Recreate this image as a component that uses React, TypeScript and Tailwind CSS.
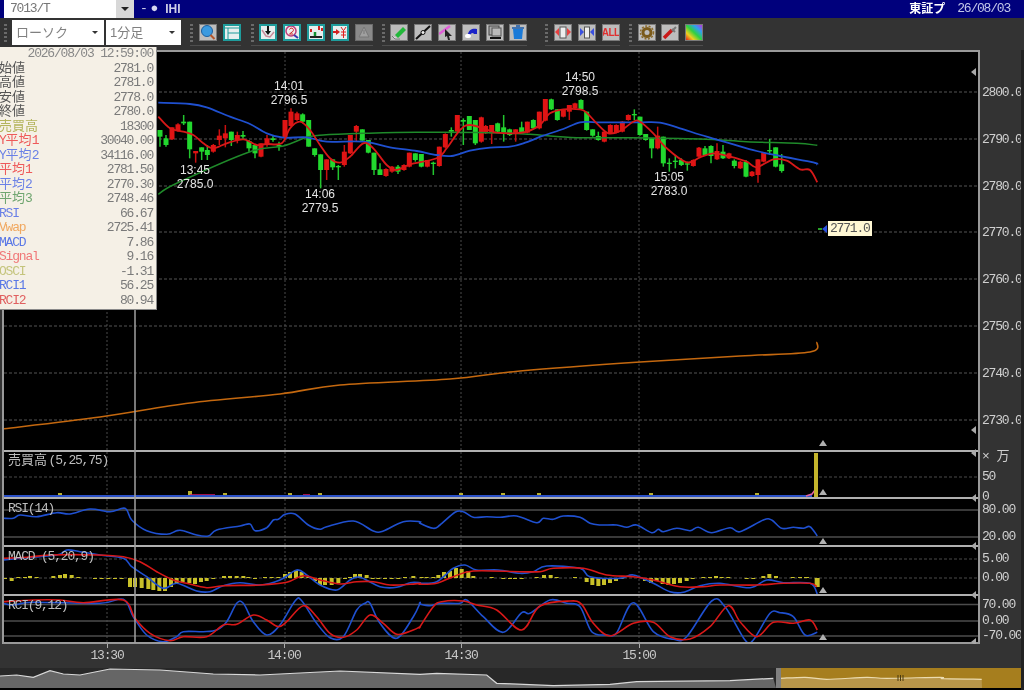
import type { ReactNode } from 'react';

type Pt = number[];

// chart data is kept in page coordinates, read off the screen in 3x crops
const conv = (ox: number, oy: number) => (a: Pt[]) => a.map(([x, y]) => [ox + x / 3, oy + y / 3]);
const a5 = conv(150, 70);
const a6 = conv(480, 70);
const a7 = conv(0, 440);
const a8 = conv(420, 440);
const pts = (a: Pt[]) => a.map((p) => `${p[0].toFixed(1)},${p[1].toFixed(1)}`).join(' ');

// catmull-rom through the read points so the averages don't look faceted
const smooth = (p: Pt[]) => {
  let d = `M${p[0][0].toFixed(1)} ${p[0][1].toFixed(1)}`;
  for (let i = 0; i < p.length - 1; i++) {
    const p0 = p[i - 1] || p[i];
    const p1 = p[i];
    const p2 = p[i + 1];
    const p3 = p[i + 2] || p2;
    const c1x = p1[0] + (p2[0] - p0[0]) / 6;
    const c1y = p1[1] + (p2[1] - p0[1]) / 6;
    const c2x = p2[0] - (p3[0] - p1[0]) / 6;
    const c2y = p2[1] - (p3[1] - p1[1]) / 6;
    d += `C${c1x.toFixed(1)} ${c1y.toFixed(1)} ${c2x.toFixed(1)} ${c2y.toFixed(1)} ${p2[0].toFixed(1)} ${p2[1].toFixed(1)}`;
  }
  return d;
};

const GREEN5: Pt[] = [
  [30, 180, 200, 180, 230], [48, 205, 225, 195, 230], [101, 155, 160, 135, 165], [119, 155, 238, 155, 265],
  [155, 232, 245, 232, 270], [172, 240, 255, 225, 270], [244, 185, 210, 185, 228], [279, 195, 200, 183, 210],
  [297, 213, 235, 210, 245], [315, 225, 250, 225, 265], [369, 205, 210, 195, 215], [387, 225, 230, 215, 242],
  [458, 133, 155, 130, 160], [476, 150, 230, 150, 230], [494, 235, 255, 235, 260], [512, 253, 300, 253, 355],
  [548, 268, 292, 268, 300], [565, 288, 292, 285, 330], [637, 178, 212, 178, 215], [655, 210, 248, 210, 250],
  [672, 248, 300, 248, 315], [690, 298, 315, 280, 315], [744, 290, 305, 285, 312], [796, 250, 270, 250, 275],
  [814, 252, 290, 252, 292], [850, 278, 282, 275, 315], [904, 180, 185, 172, 200], [940, 150, 155, 145, 225],
  [958, 138, 180, 138, 180], [976, 150, 220, 150, 225],
];
const RED5: Pt[] = [
  [66, 172, 208, 172, 210], [84, 163, 183, 160, 185], [137, 243, 250, 243, 278], [190, 225, 245, 222, 248],
  [208, 197, 210, 178, 225], [226, 190, 205, 165, 232], [262, 195, 210, 185, 220], [333, 220, 260, 220, 262],
  [351, 205, 222, 195, 230], [405, 150, 205, 150, 210], [423, 125, 168, 115, 170], [441, 130, 150, 125, 152],
  [530, 268, 300, 268, 330], [583, 245, 285, 225, 290], [601, 195, 250, 195, 252], [619, 168, 185, 165, 215],
  [708, 297, 318, 295, 320], [726, 290, 305, 288, 308], [762, 285, 300, 283, 302], [778, 248, 290, 248, 292],
  [832, 270, 290, 270, 292], [868, 230, 288, 230, 290], [886, 192, 232, 190, 235], [922, 135, 185, 135, 187],
  [994, 142, 215, 140, 218],
];
const GREEN6: Pt[] = [
  [53, 160, 185, 158, 188], [71, 172, 188, 135, 215], [89, 178, 195, 176, 198], [125, 172, 188, 155, 190],
  [160, 150, 175, 148, 178], [214, 88, 118, 86, 120], [232, 118, 150, 118, 152], [303, 90, 118, 88, 120],
  [320, 125, 180, 125, 182], [338, 178, 197, 178, 200], [355, 198, 210, 185, 212], [463, 132, 136, 118, 150],
  [480, 140, 195, 140, 197], [497, 192, 210, 192, 212], [515, 205, 235, 205, 265], [550, 200, 280, 200, 290],
  [568, 278, 282, 265, 305], [586, 272, 276, 255, 295], [604, 270, 285, 265, 288], [622, 280, 284, 275, 302],
  [675, 235, 255, 228, 258], [693, 228, 258, 226, 280], [729, 245, 265, 225, 267], [763, 272, 288, 268, 295],
  [798, 275, 320, 270, 322], [869, 240, 244, 207, 255], [887, 232, 290, 232, 292], [905, 283, 303, 252, 308],
];
const RED6: Pt[] = [
  [17, 168, 190, 165, 192], [35, 165, 190, 165, 222], [107, 178, 190, 178, 215], [142, 155, 188, 155, 190],
  [178, 125, 175, 125, 178], [196, 87, 152, 87, 154], [250, 120, 140, 118, 142], [268, 105, 125, 105, 150],
  [285, 100, 115, 98, 118], [373, 185, 215, 183, 217], [391, 165, 190, 163, 192], [409, 165, 188, 163, 190],
  [427, 155, 185, 153, 187], [445, 135, 150, 133, 152], [533, 197, 235, 170, 238], [640, 270, 288, 268, 290],
  [657, 233, 260, 231, 262], [711, 243, 268, 220, 270], [747, 250, 265, 248, 267], [781, 275, 295, 273, 297],
  [816, 305, 318, 303, 320], [834, 268, 315, 268, 338], [851, 248, 275, 246, 277],
];

const scaleCandle = (ox: number, oy: number) => (a: Pt[]) =>
  a.map(([x, t, b, wt, wb]) => [ox + x / 3, oy + t / 3, oy + b / 3, oy + wt / 3, oy + wb / 3]);
const GREENS = [...scaleCandle(150, 70)(GREEN5), ...scaleCandle(480, 70)(GREEN6)];
const REDS = [...scaleCandle(150, 70)(RED5), ...scaleCandle(480, 70)(RED6)];

const MA_BLUE = [
  ...a5([[25, 98], [120, 102], [170, 112], [240, 140], [300, 162], [350, 190], [400, 203], [470, 202], [530, 215], [640, 215], [720, 232], [800, 243], [860, 255], [905, 258], [960, 242], [1020, 233]]),
  ...a6([[90, 230], [130, 220], [190, 197], [250, 177], [300, 157], [350, 157], [480, 157], [540, 158], [600, 175], [680, 200], [750, 220], [830, 243], [900, 258], [1000, 277], [1012, 284]]),
];
const MA_RED = [
  ...a5([[25, 140], [60, 175], [100, 185], [130, 195], [160, 220], [190, 235], [230, 220], [280, 208], [320, 225], [350, 222], [395, 220], [420, 175], [450, 155], [480, 180], [510, 225], [540, 265], [570, 278], [600, 260], [640, 220], [670, 235], [710, 285], [740, 300], [780, 283], [860, 265], [890, 235], [930, 180], [960, 165], [1020, 182]]),
  ...a6([[50, 188], [100, 190], [140, 185], [180, 165], [210, 130], [250, 118], [300, 118], [320, 128], [350, 160], [385, 190], [420, 183], [460, 155], [480, 155], [520, 190], [560, 235], [620, 277], [660, 262], [700, 250], [750, 260], [800, 275], [830, 292], [880, 268], [920, 272], [960, 298], [990, 300], [1012, 337]]),
];
const MA_GREEN = [
  ...a5([[25, 373], [80, 340], [300, 245], [400, 228], [470, 202], [520, 195], [640, 190], [800, 187], [1020, 188]]),
  ...a6([[150, 193], [290, 203], [450, 203], [660, 207], [800, 215], [950, 220], [1012, 226]]),
];
const VWAP: Pt[] = [[2, 429], [100, 417], [190, 403], [280, 394], [340, 385], [450, 379], [520, 371], [640, 362], [740, 356], [810, 352], [817, 342]];

const RSI_LINE = [
  ...a7([[10, 235], [40, 235], [60, 225], [110, 230], [170, 218], [210, 222], [270, 207], [330, 215], [375, 205], [395, 240], [440, 272], [500, 283], [530, 272], [550, 272], [590, 285], [625, 288], [650, 270], [720, 258], [750, 252], [765, 272], [800, 263], [820, 240], [835, 238], [855, 223], [885, 222], [925, 255], [960, 268], [980, 260], [1060, 243], [1120, 273], [1150, 273], [1210, 245], [1260, 245]]),
  ...a8([[0, 250], [40, 265], [60, 255], [105, 217], [130, 215], [160, 232], [200, 230], [240, 232], [290, 228], [350, 248], [370, 235], [400, 238], [430, 228], [480, 232], [510, 250], [540, 255], [590, 255], [620, 262], [650, 255], [695, 278], [715, 268], [730, 275], [770, 265], [810, 272], [835, 262], [875, 278], [930, 263], [960, 275], [1030, 240], [1055, 240], [1085, 265], [1120, 262], [1150, 265], [1170, 260], [1192, 288]]),
];

const MACD_BLUE = [
  ...a7([[10, 360], [60, 355], [170, 345], [200, 330], [240, 335], [300, 345], [370, 355], [395, 380], [440, 410], [490, 445], [530, 430], [590, 453], [630, 455], [670, 437], [720, 428], [780, 435], [840, 420], [890, 390], [920, 405], [960, 435], [1010, 450], [1050, 420], [1080, 412], [1140, 440], [1190, 442], [1230, 428], [1260, 428]]),
  ...a8([[0, 430], [50, 425], [100, 385], [135, 375], [170, 390], [235, 390], [300, 400], [340, 395], [380, 378], [480, 385], [510, 410], [600, 415], [640, 405], [700, 430], [750, 455], [790, 457], [840, 437], [900, 430], [990, 443], [1040, 420], [1090, 428], [1170, 430], [1192, 462]]),
];
const MACD_RED = [
  ...a7([[10, 355], [80, 352], [150, 345], [290, 345], [370, 350], [420, 365], [470, 395], [520, 420], [560, 430], [620, 443], [670, 437], [780, 435], [860, 427], [910, 407], [960, 420], [1020, 432], [1070, 425], [1120, 425], [1170, 435], [1230, 433], [1260, 430]]),
  ...a8([[0, 433], [50, 430], [100, 410], [160, 393], [300, 395], [360, 395], [400, 385], [490, 385], [560, 405], [640, 410], [700, 420], [780, 440], [850, 440], [900, 435], [1010, 435], [1090, 430], [1170, 430], [1190, 440]]),
];
// x in crop pixels, value in page pixels, up from the zero line
const HIST: Pt[] = [
  ...[[15, -1], [35, -3], [55, 1], [75, 1], [90, 2], [110, 1], [160, 2], [180, 3], [195, 4], [215, 3], [235, 1], [285, -1], [305, -1], [325, -1], [345, -1], [365, -1], [390, -9], [405, -9], [425, -10], [445, -11], [460, -12], [478, -13], [495, -13], [513, -9], [530, -6], [548, -4], [568, -5], [585, -6], [603, -4], [620, -3], [640, -1], [672, 2], [690, 2], [710, 2], [730, 2], [745, 1], [765, -1], [795, 1], [815, 1], [835, 1], [855, 4], [870, 6], [888, 8], [905, 6], [925, 1], [945, -3], [960, -7], [975, -7], [995, -7], [1015, -5], [1035, -1], [1050, 1], [1065, 4], [1080, 4], [1100, 3], [1118, -1], [1135, -1], [1155, -1], [1175, -1], [1195, -1], [1215, 1], [1240, 2]].map(([x, v]) => [x / 3, v]),
  ...[[5, 1], [20, 1], [40, 1], [55, 3], [72, 6], [90, 7], [108, 10], [125, 9], [145, 7], [160, 2], [215, 1], [250, -1], [270, -1], [285, -1], [305, -1], [350, 1], [372, 3], [392, 3], [410, 1], [465, 1], [500, -4], [517, -7], [535, -8], [552, -7], [570, -5], [588, -3], [605, -1], [675, -3], [693, -5], [710, -3], [728, -6], [745, -7], [762, -6], [780, -5], [800, -3], [818, -1], [850, 1], [870, 1], [888, 2], [905, 1], [925, 1], [980, -1], [1000, -1], [1030, 2], [1048, 4], [1068, 2], [1118, 1], [1140, 1], [1158, 1], [1190, -9]].map(([x, v]) => [420 + x / 3, v]),
];

const RCI_BLUE = [
  ...a7([[10, 490], [40, 495], [100, 487], [300, 490], [370, 478], [400, 530], [440, 585], [490, 605], [530, 590], [550, 575], [610, 575], [650, 570], [680, 545], [710, 490], [730, 490], [760, 545], [800, 585], [840, 555], [885, 483], [905, 482], [950, 550], [990, 593], [1030, 590], [1070, 510], [1095, 490], [1110, 490], [1140, 550], [1190, 595], [1240, 530], [1260, 490]]),
  ...a8([[0, 492], [30, 497], [60, 490], [120, 490], [140, 480], [190, 530], [250, 577], [305, 518], [330, 520], [390, 480], [440, 490], [480, 500], [515, 575], [560, 585], [590, 578], [640, 488], [700, 575], [760, 598], [800, 590], [875, 483], [915, 500], [975, 600], [1000, 600], [1050, 520], [1080, 518], [1120, 530], [1155, 585], [1192, 577]]),
];
const RCI_RED = [
  ...a7([[10, 485], [100, 480], [180, 480], [250, 488], [370, 480], [405, 535], [450, 580], [510, 602], [550, 590], [620, 590], [670, 555], [710, 553], [760, 525], [800, 540], [835, 560], [860, 545], [910, 497], [950, 530], [990, 580], [1030, 592], [1070, 570], [1110, 525], [1150, 550], [1190, 583], [1240, 570], [1260, 560]]),
  ...a8([[0, 560], [40, 500], [65, 485], [130, 483], [170, 495], [230, 510], [305, 570], [360, 498], [450, 483], [485, 493], [520, 550], [570, 588], [640, 550], [700, 547], [750, 590], [810, 597], [870, 560], [925, 497], [960, 545], [1010, 590], [1060, 547], [1120, 550], [1170, 540], [1192, 570]]),
];

const NAV_LINE = [
  ...a7([[0, 708], [50, 705], [100, 712], [150, 692], [190, 702], [240, 705], [330, 687], [480, 690], [640, 702], [780, 705], [1020, 693], [1260, 703]]),
  ...a8([[50, 700], [200, 705], [230, 730], [400, 737], [570, 733], [650, 725], [930, 722], [1060, 715]]),
];
const NAV_GOLD = conv(780, 430)([[0, 745], [75, 742], [140, 748], [260, 742], [320, 745], [480, 742], [490, 746], [605, 748]]);

const GRID_X = [107, 285, 461, 639];
const GRID_Y = [92, 139, 186, 232, 279, 326, 373, 420];
const VOL_TICKS = [60, 190, 225, 290, 320, 461, 503, 539, 651, 757];

const TIPS = [
  { t: '13:45', v: '2785.0', x: 195, y: 170 },
  { t: '14:01', v: '2796.5', x: 289, y: 86 },
  { t: '14:06', v: '2779.5', x: 320, y: 194 },
  { t: '14:50', v: '2798.5', x: 580, y: 77 },
  { t: '15:05', v: '2783.0', x: 669, y: 177 },
];

const INFO = [
  ['始値', '2781.0', 'text-[#555]'],
  ['高値', '2781.0', 'text-[#555]'],
  ['安値', '2778.0', 'text-[#555]'],
  ['終値', '2780.0', 'text-[#555]'],
  ['売買高', '18300', 'text-[#b4b45c]'],
  ['Y平均1', '30040.00', 'text-[#ee5a5a]'],
  ['Y平均2', '34116.00', 'text-[#6a80e6]'],
  ['平均1', '2781.50', 'text-[#ee5a5a]'],
  ['平均2', '2770.30', 'text-[#6a80e6]'],
  ['平均3', '2748.46', 'text-[#6fa56f]'],
  ['RSI', '66.67', 'text-[#6a80e6]'],
  ['Vwap', '2725.41', 'text-[#f0a860]'],
  ['MACD', '7.86', 'text-[#5a78e6]'],
  ['Signal', '9.16', 'text-[#f07878]'],
  ['OSCI', '-1.31', 'text-[#c4c47c]'],
  ['RCI1', '56.25', 'text-[#5a78e6]'],
  ['RCI2', '80.94', 'text-[#e06060]'],
];

const AXIS = [
  ['2800.0', 92], ['2790.0', 139], ['2780.0', 186], ['2770.0', 232], ['2760.0', 279], ['2750.0', 326], ['2740.0', 373], ['2730.0', 420],
  ['× 万', 456], ['50', 476], ['0', 496], ['80.00', 509], ['20.00', 536], ['5.00', 558], ['0.00', 577], ['70.00', 604], ['0.00', 620], ['-70.00', 635],
] as const;

const TIMES = [['13:30', 107], ['14:00', 284], ['14:30', 461], ['15:00', 639]] as const;

const mono = "font-['Liberation_Mono','Noto_Sans_CJK_JP',monospace] text-[13px] tracking-[-1.2px]";
const sans = "font-['Liberation_Sans','Noto_Sans_CJK_JP',sans-serif]";

function Line({ p, c, w = 2 }: { p: Pt[]; c: string; w?: number }) {
  return <path d={smooth(p)} fill="none" stroke={c} strokeWidth={w} strokeLinejoin="round" />;
}

// kana and kanji keep their full width, only the latin letters are squeezed
function Mixed({ text }: { text: string }) {
  return (
    <>
      {text.split(/([^\x00-\x7f]+)/).map((part, i) =>
        i % 2 ? (
          <span key={i} className="tracking-[0px]">
            {part}
          </span>
        ) : (
          part
        ),
      )}
    </>
  );
}

function Panel({ top, h, children, label, labelTop }: { top: number; h: number; children: ReactNode; label?: string; labelTop?: string }) {
  return (
    <div className="relative w-full shrink-0" style={{ height: h }}>
      <svg className="block w-full" height={h} viewBox={`4 ${top} 974 ${h}`}>
        {GRID_X.map((x) => (
          <line key={x} x1={x} x2={x} y1={top} y2={top + h} stroke="#4a4a4a" strokeDasharray="2 2" />
        ))}
        {children}
      </svg>
      {label && (
        <span className={`absolute left-[4px] leading-[14px] text-[#bdbdbd] whitespace-nowrap ${labelTop} ${mono}`}>
          <Mixed text={label} />
        </span>
      )}
    </div>
  );
}

function Sep() {
  return <div className="h-[2px] shrink-0 bg-[#b0b0b0]" />;
}

function Grip() {
  return (
    <div className="flex flex-col gap-[2px] w-[3px]">
      <i className="block h-[2px] w-[3px] bg-[#6a6a6a]" />
      <i className="block h-[2px] w-[3px] bg-[#6a6a6a]" />
      <i className="block h-[2px] w-[3px] bg-[#6a6a6a]" />
      <i className="block h-[2px] w-[3px] bg-[#6a6a6a]" />
      <i className="block h-[2px] w-[3px] bg-[#6a6a6a]" />
    </div>
  );
}

function Btn({ teal, dim, children }: { teal?: boolean; dim?: boolean; children: ReactNode }) {
  const cls = teal
    ? 'border-2 border-[#1f9c9c] bg-[#e8eeee]'
    : dim
      ? 'border border-[#6c6c6c] bg-[#8a8a8a]'
      : 'border border-[#7a7a7a] bg-[#bdbdbd]';
  return (
    <div className={`flex items-center justify-center w-[18px] h-[17px] overflow-hidden shrink-0 ${cls}`}>{children}</div>
  );
}

function Ico({ children }: { children: ReactNode }) {
  return (
    <svg width="16" height="15" viewBox="0 0 16 15" className="block shrink-0">
      {children}
    </svg>
  );
}

function Combo({ w, text }: { w: string; text: string }) {
  return (
    <div className={`flex items-center justify-between h-[25px] bg-white pl-[4px] pr-[6px] ${w}`}>
      <span className={`text-[#808080] ${sans} text-[13px]`}>{text}</span>
      <i className="block w-0 h-0 border-x-[3px] border-x-transparent border-t-[3px] border-t-[#333]" />
    </div>
  );
}

function Group({ cls, children }: { cls: string; children: ReactNode }) {
  return <div className={`flex items-center gap-[5.8px] h-[26px] border-b border-[#4e4e4e] ${cls}`}>{children}</div>;
}

export default function App() {
  return (
    <div className="w-[1024px] h-[690px] overflow-hidden bg-[#333]">
      <div className="relative flex flex-col w-[1024px] h-[690px] bg-[#333] blur-[0.45px]">
        {/* Title bar */}
        <div className="flex items-center h-[18px] bg-[#00007c] shrink-0">
          <div className="flex items-center w-[112px] h-full ml-[4px] bg-white pl-[6px]">
            <span className={`text-[#777] ${mono}`}>7013/T</span>
          </div>
          <div className="flex items-center justify-center w-[18px] h-full bg-[#d8d8d8]">
            <i className="block w-0 h-0 border-x-[4px] border-x-transparent border-t-[4px] border-t-[#222]" />
          </div>
          <span className={`ml-[6px] text-[#d8d8f0] ${mono}`}>
            <span className="mr-[4px]">-</span>●
          </span>
          <span className={`ml-[8px] text-[#d0d0e8] ${sans} text-[12px] font-bold`}>IHI</span>
          <span className={`ml-auto text-white ${sans} text-[12px] font-bold`}>東証プ</span>
          <span className={`ml-[12px] mr-[14px] text-[#c4c8ea] ${mono}`}>26/08/03</span>
        </div>

        {/* Toolbar */}
        <div className="flex items-start h-[32px] shrink-0 pl-[4px] pt-[2px] bg-[#333]">
          <div className="mt-[4px] mr-[5px]">
            <Grip />
          </div>
          <Combo w="w-[92px] mr-[2px]" text="ローソク" />
          <Combo w="w-[75px] mr-[9px]" text="1分足" />
          <Group cls="mr-[10px]">
            <Grip />
            <Btn>
              <Ico>
                <circle cx="7" cy="6" r="5.5" fill="#3a9ae0" stroke="#1d5f9e" />
                <path d="M10.5 10 L14.5 14" stroke="#b5562a" strokeWidth="2" />
              </Ico>
            </Btn>
            <Btn teal>
              <Ico>
                <path d="M0 3H16M4 3V15M4 8H16" stroke="#1f9c9c" fill="none" />
              </Ico>
            </Btn>
          </Group>
          <Group cls="mr-[9px]">
            <Grip />
            <Btn teal>
              <Ico>
                <path d="M7 1H9V6H11L8 10L5 6H7Z" fill="#111" />
                <path d="M2 5 L6 11 L10 12 L14 7" stroke="#c88a9a" strokeWidth="1.5" fill="none" />
              </Ico>
            </Btn>
            <Btn teal>
              <Ico>
                <circle cx="7" cy="6" r="5" fill="#eee" stroke="#c03a7a" strokeWidth="1.5" />
                <path d="M5.5 4.5 A2 2 0 1 1 8 7 L5.5 9 H9" stroke="#d02020" fill="none" />
                <path d="M10 10 L14 13" stroke="#3a3ab0" strokeWidth="2" />
              </Ico>
            </Btn>
            <Btn teal>
              <Ico>
                <path d="M3 4V7M11 1V5M14 3V6" stroke="#d02020" strokeWidth="2" />
                <path d="M7 7V11" stroke="#109030" strokeWidth="2.5" />
                <path d="M2 12H14" stroke="#222" strokeWidth="2" />
              </Ico>
            </Btn>
            <Btn teal>
              <Ico>
                <path d="M0 7H5" stroke="#d02020" strokeWidth="2" />
                <path d="M4 4L8 7L4 10Z" fill="#d02020" />
                <path d="M9 2L11 5M14 2L12 5M11.5 5V13M9 7H14M9 10H14" stroke="#e02020" fill="none" />
              </Ico>
            </Btn>
            <Btn dim>
              <Ico>
                <path d="M8 2L13 12H3Z" fill="#a0a0a0" stroke="#777" />
                <path d="M8 5V9" stroke="#777" />
              </Ico>
            </Btn>
          </Group>
          <Group cls="mr-[18px]">
            <Grip />
            <Btn>
              <Ico>
                <path d="M4 10L12 2L15 5L7 13Z" fill="#22b83a" />
                <path d="M1 11L4 14H9" stroke="#777" fill="#ddd" />
              </Ico>
            </Btn>
            <Btn>
              <Ico>
                <path d="M1 14L15 1" stroke="#111" strokeWidth="2" />
                <circle cx="8" cy="7.5" r="2" fill="#eee" stroke="#111" />
              </Ico>
            </Btn>
            <Btn>
              <Ico>
                <path d="M0 9L11 1" stroke="#e060d8" strokeWidth="2.5" />
                <path d="M6 4L13 11L10 11L11 15L9 15L8 11L6 12Z" fill="#222" />
              </Ico>
            </Btn>
            <Btn>
              <Ico>
                <path d="M5 9C6 4 10 3 14 4V9H11C10 7 8 8 7 10Z" fill="#1a22c8" />
                <rect x="2" y="9" width="6" height="4" rx="2" fill="#fff" />
              </Ico>
            </Btn>
            <Btn>
              <Ico>
                <rect x="2" y="1" width="10" height="9" fill="#aaa" stroke="#444" />
                <rect x="5" y="3" width="9" height="8" fill="#bbb" stroke="#555" />
                <path d="M3 13H14" stroke="#111" strokeWidth="2" />
              </Ico>
            </Btn>
            <Btn>
              <Ico>
                <path d="M3 4H13L12 14H4Z" fill="#1a7ad8" />
                <path d="M2 3H14M6 1H10" stroke="#1a5aa8" strokeWidth="1.5" />
              </Ico>
            </Btn>
          </Group>
          <Group cls="mr-[9px]">
            <Grip />
            <Btn>
              <Ico>
                <path d="M0 7L4 3V11ZM16 7L12 3V11Z" fill="#e84040" />
                <rect x="5" y="2" width="6" height="11" fill="#eee" stroke="#555" />
              </Ico>
            </Btn>
            <Btn>
              <Ico>
                <path d="M5 7L1 3V11ZM11 7L15 3V11Z" fill="#3a50e0" />
                <rect x="5.5" y="2" width="5" height="11" fill="#eee" stroke="#555" />
              </Ico>
            </Btn>
            <Btn>
              <span className={`${sans} text-[10px] font-bold text-[#e03030] tracking-[-0.5px]`}>ALL</span>
            </Btn>
          </Group>
          <Group cls="">
            <Grip />
            <Btn>
              <Ico>
                <circle cx="8" cy="7.5" r="4" fill="none" stroke="#7a5a1a" strokeWidth="3" />
                <circle cx="8" cy="7.5" r="6.5" fill="none" stroke="#8a6a2a" strokeWidth="1.5" strokeDasharray="2 1.5" />
              </Ico>
            </Btn>
            <Btn>
              <Ico>
                <path d="M2 13L10 5" stroke="#c81818" strokeWidth="3.5" />
                <path d="M10 6L14 2M13 7L10 4" stroke="#777" strokeWidth="2" />
              </Ico>
            </Btn>
            <Btn>
              <svg width="16" height="15" viewBox="0 0 16 15" className="block">
                <defs>
                  <linearGradient id="rainbow" x1="0" y1="1" x2="1" y2="0">
                    <stop offset="0" stopColor="#e02020" />
                    <stop offset="0.25" stopColor="#f0d020" />
                    <stop offset="0.5" stopColor="#30d040" />
                    <stop offset="0.75" stopColor="#30a0f0" />
                    <stop offset="1" stopColor="#c030e0" />
                  </linearGradient>
                </defs>
                <rect width="16" height="15" fill="url(#rainbow)" />
              </svg>
            </Btn>
          </Group>
        </div>

        {/* Charts and price axis */}
        <div className="flex h-[594px] shrink-0">
          <div className="relative ml-[2px] w-[978px] flex flex-col border-2 border-[#9a9a9a] bg-black">
            <Panel top={52} h={398}>
              {GRID_Y.map((y) => (
                <line key={y} x1={4} x2={978} y1={y} y2={y} stroke="#555" strokeDasharray="3 2" />
              ))}
              {GREENS.map(([x, t, b, wt, wb]) => (
                <g key={`g${x}`}>
                  <line x1={x} x2={x} y1={wt} y2={wb} stroke="#22c52e" strokeWidth="1.5" />
                  <rect x={x - 2.5} y={t} width="5" height={Math.max(b - t, 1)} fill="#22d82e" />
                </g>
              ))}
              {REDS.map(([x, t, b, wt, wb]) => (
                <g key={`r${x}`}>
                  <line x1={x} x2={x} y1={wt} y2={wb} stroke="#c81010" strokeWidth="1.5" />
                  <rect x={x - 2.5} y={t} width="5" height={Math.max(b - t, 1)} fill="#e01414" />
                </g>
              ))}
              <Line p={MA_GREEN} c="#1f8a2a" w={1.5} />
              <Line p={MA_BLUE} c="#1f50d0" w={1.8} />
              <Line p={MA_RED} c="#d81818" w={1.8} />
              <Line p={VWAP} c="#c4680f" w={1.6} />
              {TIPS.map((t) => (
                <g key={t.t} fill="#e4e4e4" fontSize="12" textAnchor="middle" fontFamily="'Liberation Sans',sans-serif">
                  <text x={t.x} y={t.y + 4}>{t.t}</text>
                  <text x={t.x} y={t.y + 18}>{t.v}</text>
                </g>
              ))}
            </Panel>
            <Sep />
            <Panel top={452} h={45} label="売買高 (5,25,75)" labelTop="top-[2px] [word-spacing:-5px]">
              <line x1={4} x2={978} y1={477} y2={477} stroke="#4a4a4a" strokeDasharray="3 2" />
              {VOL_TICKS.map((x) => (
                <rect key={x} x={x - 2} y={x === 190 ? 491 : 493} width="4" height="4" fill="#b8b030" />
              ))}
              <path d="M190 495H215M303 495H310" stroke="#d81860" strokeWidth="1.5" />
              <path d="M4 496H812" stroke="#2a50c8" strokeWidth="2" />
              <path d="M806 496L812 494L815 490" stroke="#e060a0" strokeWidth="1.5" fill="none" />
              <rect x={814} y={453} width="4" height="44" fill="#c4b42c" />
            </Panel>
            <Sep />
            <Panel top={499} h={46} label="RSI(14)" labelTop="top-[3px]">
              <path d="M4 510H978M4 537H978" stroke="#4c4c4c" strokeWidth="1.5" />
              <Line p={RSI_LINE} c="#1f50d0" w={1.6} />
            </Panel>
            <Sep />
            <Panel top={547} h={47} label="MACD (5,20,9)" labelTop="top-[3px]">
              <path d="M4 559H978M4 578H978" stroke="#4a4a4a" strokeDasharray="3 2" />
              {HIST.map(([x, v]) => (
                <rect key={x} x={x - 2} y={v > 0 ? 578 - v : 578} width={x > 800 ? 5 : 4} height={Math.abs(v)} fill="#c8c028" />
              ))}
              <Line p={MACD_BLUE} c="#1f50d0" w={1.6} />
              <Line p={MACD_RED} c="#d81818" w={1.6} />
            </Panel>
            <Sep />
            <Panel top={596} h={46} label="RCI(9,12)" labelTop="top-[3px]">
              <path d="M4 604.5H978M4 621H978M4 636H978" stroke="#4c4c4c" strokeWidth="1.5" />
              <Line p={RCI_BLUE} c="#1f50d0" w={1.6} />
              <Line p={RCI_RED} c="#d81818" w={1.6} />
            </Panel>

            {/* Overlay: cross hair, scroll arrows */}
            <svg className="absolute left-[-2px] top-[-2px]" width="978" height="594" viewBox="2 50 978 594">
              <line x1={135} x2={135} y1={50} y2={643} stroke="#a0a0a0" strokeWidth="1.5" />
              {[72, 430, 453, 498, 546, 595, 642].map((y) => (
                <path key={y} d={`M971 ${y}L976 ${y - 4}V${y + 4}Z`} fill="#a8a8a8" />
              ))}
              {[443, 492, 541, 590, 637].map((y) => (
                <path key={y} d={`M823 ${y - 3}L827 ${y + 3}H819Z`} fill="#b0b0b0" />
              ))}
            </svg>
            <div className="absolute left-[814px] top-[169px] flex items-center">
              <i className="block h-[2px] w-[4px] bg-[#28a028]" />
              <i className="block w-0 h-0 border-y-[4px] border-y-transparent border-r-[5px] border-r-[#2a50e0]" />
              <span className={`ml-[1px] px-[2px] bg-[#fff8d4] text-[#555] leading-[15px] ${mono}`}>2771.0</span>
            </div>
          </div>

          <div className="relative flex-1">
            {AXIS.map(([text, y]) => (
              <span key={`${text}${y}`} className={`absolute left-[2px] leading-[14px] text-[#d0d0d0] whitespace-nowrap ${mono}`} style={{ top: y - 56 }}>
                <Mixed text={text} />
              </span>
            ))}
          </div>
        </div>

        {/* Time axis */}
        <div className="relative h-[24px] shrink-0">
          {TIMES.map(([t, x]) => (
            <div key={t} className="absolute top-0 flex flex-col items-center w-[40px]" style={{ left: x - 20 }}>
              <i className="block h-[4px] w-px bg-[#aaa]" />
              <span className={`text-[#c8c8c8] leading-[14px] mt-[1px] ${mono}`}>{t}</span>
            </div>
          ))}
        </div>

        {/* Navigator */}
        <div className="flex shrink-0 h-[20px]">
          <svg className="block" width="1021" height="20" viewBox="0 668 1021 20">
            <rect x="0" y="668" width="776" height="20" fill="#282828" />
            <polygon points={`0,688 ${pts(NAV_LINE)} 776,688`} fill="#666" />
            <path d={`M${pts(NAV_LINE).split(' ').join('L')}`} fill="none" stroke="#d8d8d8" strokeWidth="1.2" />
            <rect x="776" y="668" width="245" height="20" fill="#a67e1e" />
            <polygon points={`781,688 ${pts(NAV_GOLD)} 982,688`} fill="#b8964a" />
            <Line p={NAV_GOLD} c="#ecdcb0" w={1.2} />
            <rect x="776" y="668" width="5" height="20" fill="#808080" />
            <path d="M898 675V681M900.5 675V681M903 675V681" stroke="#4a3a10" />
          </svg>
        </div>
        <div className="h-[2px] bg-black shrink-0" />
        <div className="absolute right-0 top-[50px] bottom-0 w-[3px] bg-[#222]" />

        {/* Info window over the chart */}
        <div className="absolute left-0 top-[47px] w-[157px] h-[263px] bg-[#f5f0e6] border-r border-b border-[#8a8a8a] overflow-hidden">
          <div className={`h-[14.5px] leading-[14.5px] text-right pr-[3px] text-[#888] ${mono}`}>2026/08/03 12:59:00</div>
          {INFO.map(([name, value, color]) => (
            <div key={name} className={`flex justify-between h-[14.5px] leading-[14.5px] pr-[3px] ${mono}`}>
              <span className={`-ml-[1px] ${color}`}>
                <Mixed text={name} />
              </span>
              <span className="text-[#7a7a7a]">{value}</span>
            </div>
          ))}
        </div>
      </div>
    </div>
  );
}
